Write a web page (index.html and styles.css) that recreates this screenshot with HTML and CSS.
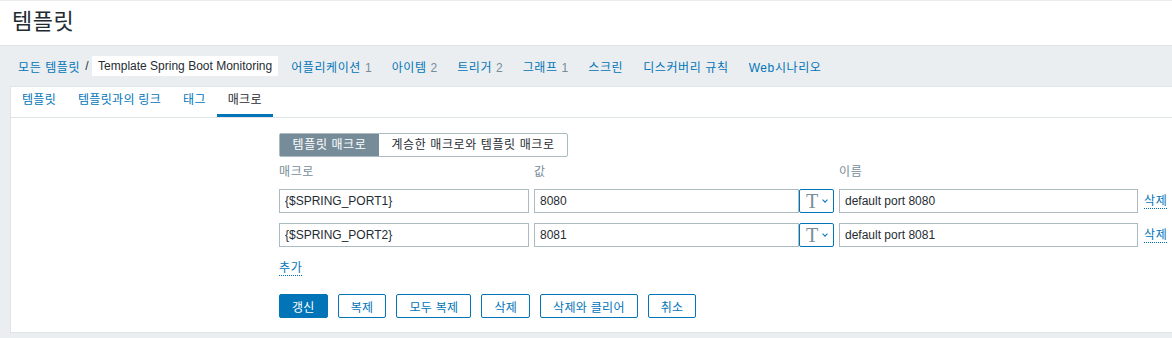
FILE: index.html
```html
<!DOCTYPE html>
<html lang="ko">

<head>
    <meta charset="UTF-8">
    <title>템플릿</title>
    <link rel="stylesheet" href="styles.css">
</head>

<body>
    <div id="header">
        <h1>템플릿</h1>
    </div>

    <div id="nav">
        <a class="crumb" href="#">모든 템플릿</a>
        <span class="sep">/</span>
        <span class="current">Template Spring Boot Monitoring</span>
        <ul class="nav-list">
            <li><a href="#">어플리케이션</a> <span class="count">1</span></li>
            <li><a href="#">아이템</a> <span class="count">2</span></li>
            <li><a href="#">트리거</a> <span class="count">2</span></li>
            <li><a href="#">그래프</a> <span class="count">1</span></li>
            <li><a href="#">스크린</a></li>
            <li><a href="#">디스커버리 규칙</a></li>
            <li><a href="#">Web시나리오</a></li>
        </ul>
    </div>

    <div id="panel">
        <ul class="tabs">
            <li><a href="#">템플릿</a></li>
            <li><a href="#">템플릿과의 링크</a></li>
            <li><a href="#">태그</a></li>
            <li class="active"><a href="#">매크로</a></li>
        </ul>

        <div class="form">
            <div class="segmented">
                <span class="seg selected">템플릿 매크로</span>
                <span class="seg">계승한 매크로와 템플릿 매크로</span>
            </div>

            <div class="macro-row head">
                <div class="col-macro">매크로</div>
                <div class="col-value">값</div>
                <div class="col-name">이름</div>
            </div>

            <div class="macro-row">
                <input class="col-macro" type="text" value="{$SPRING_PORT1}">
                <div class="col-value value-box">
                    <input type="text" value="8080">
                    <button class="type-btn"><span class="t">T</span><span class="chev"></span></button>
                </div>
                <input class="col-name" type="text" value="default port 8080">
                <a class="link" href="#">삭제</a>
            </div>

            <div class="macro-row">
                <input class="col-macro" type="text" value="{$SPRING_PORT2}">
                <div class="col-value value-box">
                    <input type="text" value="8081">
                    <button class="type-btn"><span class="t">T</span><span class="chev"></span></button>
                </div>
                <input class="col-name" type="text" value="default port 8081">
                <a class="link" href="#">삭제</a>
            </div>

            <div class="add-row">
                <a class="link" href="#">추가</a>
            </div>

            <div class="buttons">
                <button class="btn primary">갱신</button>
                <button class="btn">복제</button>
                <button class="btn">모두 복제</button>
                <button class="btn">삭제</button>
                <button class="btn">삭제와 클리어</button>
                <button class="btn">취소</button>
            </div>
        </div>
    </div>
</body>

</html>
```

FILE: styles.css
```css
body {
    margin: 0;
    background: #ebeef0;
    color: #1f2c33;
    font-family: "Liberation Sans", Arial, "Noto Sans CJK KR", sans-serif;
    font-size: 12px;
    letter-spacing: 0.6px;
    overflow: hidden;
}

a {
    color: #0275b8;
    text-decoration: none;
}

ul {
    list-style: none;
    margin: 0;
    padding: 0;
}

#header {
    background: #fff;
    border-top: 1px solid #ebeef0;
    border-bottom: 1px solid #dfe4e7;
    height: 44px;
    padding-left: 12px;
}

#header h1 {
    margin: 0;
    font-weight: normal;
    font-size: 22px;
    letter-spacing: 0.5px;
    line-height: 42px;
}

#nav {
    display: flex;
    align-items: center;
    height: 40px;
    padding-left: 18px;
}

.sep {
    margin: 0 3px 0 5px;
}

.current {
    background: #fff;
    padding: 3px 6px;
    line-height: 14px;
    letter-spacing: 0;
}

.nav-list {
    display: flex;
    margin-left: 7px;
}

.nav-list li {
    margin: 0 6px;
}

.nav-list li + li {
    margin-left: 14px;
}

.count {
    color: #768d99;
    letter-spacing: 0;
}

#panel {
    background: #fff;
    margin-left: 10px;
    border: 1px solid #dfe4e7;
    border-right: none;
    height: 245px;
}

.tabs {
    display: flex;
    border-bottom: 1px solid #dfe4e7;
    letter-spacing: 0.3px;
}

.tabs li a {
    display: block;
    padding: 0 11px;
    line-height: 27px;
    border-bottom: 3px solid transparent;
}

.tabs li.active a {
    color: #1f2c33;
    border-bottom-color: #0275b8;
}

.form {
    padding: 15px 0 0 268px;
}

.segmented {
    display: flex;
    width: fit-content;
    border: 1px solid #acbbc2;
    border-radius: 2px;
    height: 22px;
}

.seg {
    box-sizing: border-box;
    width: 188px;
    text-align: center;
    line-height: 22px;
}

.seg.selected {
    background: #768d99;
    color: #fff;
    width: 99px;
}

.macro-row {
    display: flex;
    align-items: center;
    margin-bottom: 10px;
}

.macro-row.head {
    color: #768d99;
    margin: 8px 0 10px;
    line-height: 14px;
}

.col-macro {
    width: 250px;
}

.col-value {
    width: 300px;
    margin-left: 5px;
}

.col-name {
    width: 299px;
    margin-left: 5px;
}

input {
    box-sizing: border-box;
    height: 24px;
    border: 1px solid #acbbc2;
    padding: 0 5px;
    font-family: inherit;
    font-size: 12px;
    color: #1f2c33;
}

.value-box {
    display: flex;
}

.value-box input {
    width: 265px;
}

.type-btn {
    box-sizing: border-box;
    width: 35px;
    height: 24px;
    border: 1px solid #0275b8;
    border-radius: 2px;
    background: #fff;
    display: flex;
    align-items: center;
    padding: 0 0 0 6px;
}

.type-btn .t {
    font-family: "Liberation Serif", serif;
    font-size: 20px;
    color: #768d99;
    line-height: 20px;
}

.type-btn .chev {
    width: 3px;
    height: 3px;
    border-right: 1px solid #0275b8;
    border-bottom: 1px solid #0275b8;
    transform: rotate(45deg);
    margin: -3px 0 0 5px;
}

.link {
    border-bottom: 1px dotted #0275b8;
    line-height: 14px;
}

.macro-row .link {
    margin-left: 6px;
}

.add-row {
    margin-top: 14px;
    line-height: 14px;
}

.buttons {
    display: flex;
    gap: 10px;
    margin-top: 19px;
}

.btn {
    box-sizing: border-box;
    height: 24px;
    padding: 0 12px;
    border: 1px solid #0275b8;
    border-radius: 2px;
    background: #fff;
    color: #0275b8;
    font-family: inherit;
    font-size: 12px;
    letter-spacing: 0.3px;
}

.btn.primary {
    background: #0275b8;
    color: #fff;
}
```
